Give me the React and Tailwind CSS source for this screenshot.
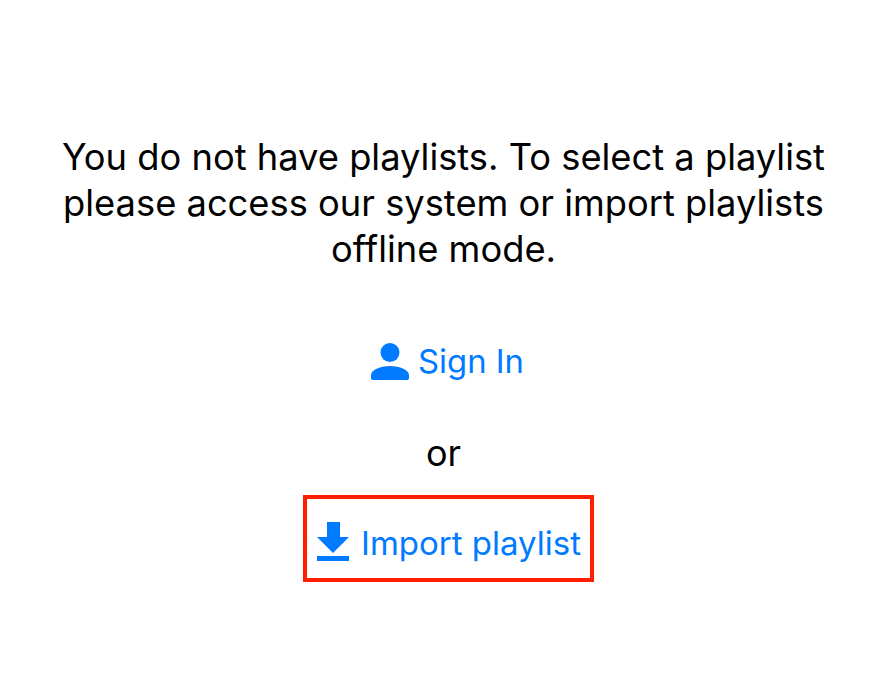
function PersonIcon() {
  return (
    <svg width="38" height="37" viewBox="0 0 38 37" fill="#007aff">
      <circle cx="19" cy="9.5" r="9.5" />
      <path d="M2 37 c-1.200 0-2-.8-2-2 v-3 c0-5 9-9 19-9 s19 4 19 9 v3 c0 1.200-.8 2-2 2 z" />
    </svg>
  )
}

function DownloadIcon() {
  return (
    <svg width="32" height="39" viewBox="0 0 32 39" fill="#007aff">
      <path d="M10 0 h13 v15 h9 L16 31 0 15 h10 z" />
      <rect x="0" y="34" width="32" height="5" />
    </svg>
  )
}

export default function App() {
  return (
    <div className="min-h-screen bg-white flex flex-col items-center pt-[134px] font-['Inter','Liberation_Sans',sans-serif]">
      <p className="w-[800px] text-center text-[36.3px] leading-[46px] text-black">
        You do not have playlists. To select a playlist please access our system or import playlists offline mode.
      </p>
      <button className="mt-[66px] ml-[8px] flex items-center gap-[9px] text-[#007aff] text-[32.8px] leading-[46px]">
        <PersonIcon />
        Sign In
      </button>
      <div className="mt-[46px] text-[36px] leading-[46px] text-black">or</div>
      <div className="mt-[19px] ml-[10px] border-4 border-[#ff1f00] h-[87px] w-[291px] flex items-center justify-center gap-[12px] pt-[10px] pl-[1px] text-[#007aff] text-[33px]">
        <span className="-mt-[4px] flex">
          <DownloadIcon />
        </span>
        Import playlist
      </div>
    </div>
  )
}
